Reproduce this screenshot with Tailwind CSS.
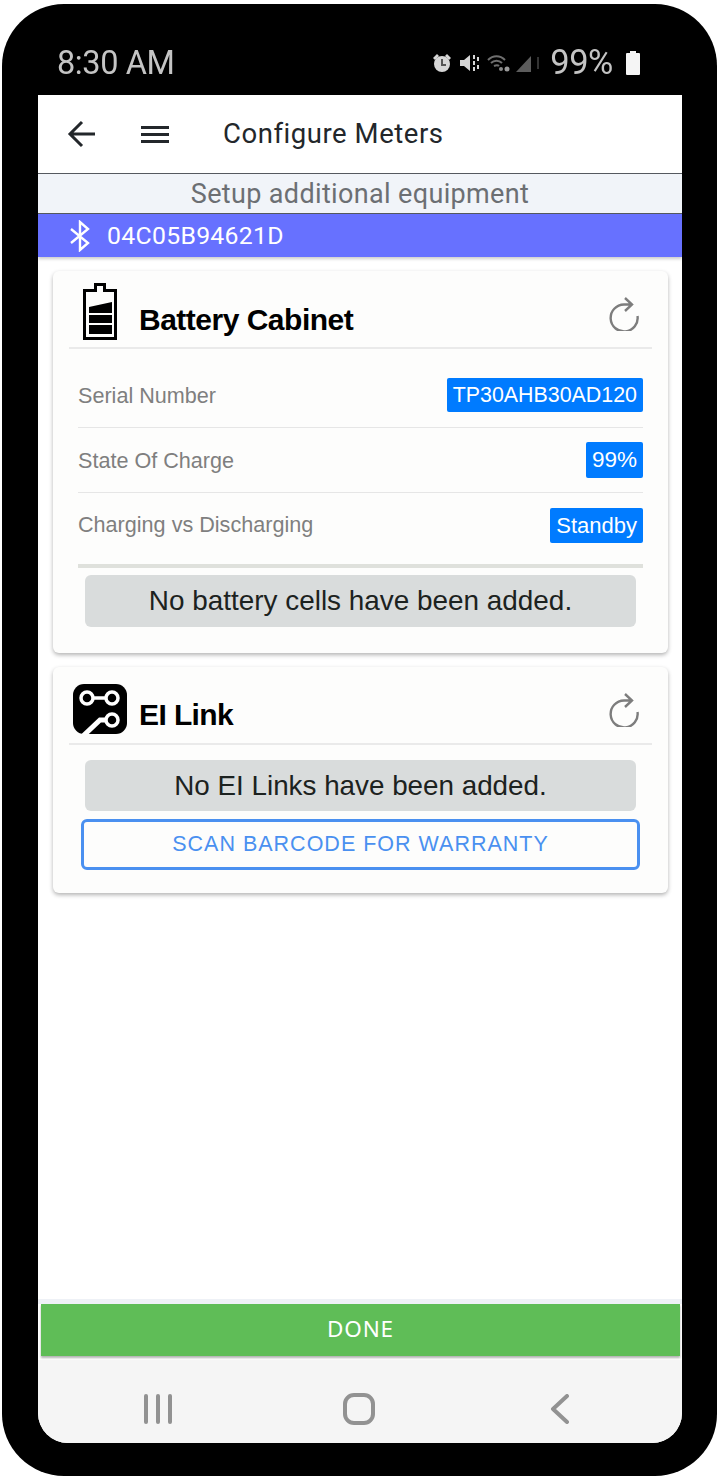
<!DOCTYPE html>
<html lang="en">
<head>
    <meta charset="UTF-8">
    <meta name="viewport" content="width=device-width, initial-scale=1.0">
    <title>Configure Meters</title>
    <script src="https://cdn.jsdelivr.net/npm/@tailwindcss/browser@4"></script>
</head>

<body class="bg-white h-[1479px] w-[720px] overflow-hidden font-['Roboto',sans-serif]">

    <!-- Phone frame -->
    <div class="ml-[2px] mt-[4px] w-[715px] h-[1472px] bg-black rounded-[62px] px-[36px] flex flex-col">

        <!-- Status bar -->
        <div class="h-[91px] shrink-0 flex items-center justify-between pl-[19px] pr-[40px] pt-[27px] text-[#c4c4c4] blur-[0.7px]">
            <span class="text-[32.5px] tracking-[-0.4px]">8:30 AM</span>
            <div class="flex items-center">
                <svg class="w-[20px] h-[20px]" viewBox="0 0 20 20" fill="#d6d6d6">
                    <circle cx="10" cy="11" r="8"/>
                    <path d="M1 5l4-4 2 2-4 4zM19 5l-4-4-2 2 4 4z"/>
                    <path d="M9 6h2v5h3v2H9z" fill="#555"/>
                </svg>
                <svg class="w-[21px] h-[20px] ml-[7px]" viewBox="0 0 21 20" fill="#d6d6d6">
                    <path d="M1 7h4l6-5v16l-6-5H1z"/>
                    <path d="M14 2h2v4h-2zM14 8h2v4h-2zM14 14h2v4h-2zM18 4h2v4h-2zM18 12h2v4h-2z"/>
                </svg>
                <svg class="w-[24px] h-[20px] ml-[7px]" viewBox="0 0 24 20" fill="none" stroke="#6f6f6f" stroke-width="2">
                    <path d="M1 7c5-5 12-5 17 0M4 10c3-3 8-3 11 0M7 13c2-1 4-1 5 0"/>
                    <circle cx="14" cy="16" r="2" fill="#8a8a8a" stroke="none"/>
                    <circle cx="20" cy="16" r="2.5" fill="#9a9a9a" stroke="none"/>
                </svg>
                <svg class="w-[18px] h-[20px] ml-[4px]" viewBox="0 0 18 20" fill="#5c5c5c">
                    <path d="M1 19L16 3v16z"/>
                </svg>
                <span class="w-[2px] h-[12px] ml-[4px] bg-[#333]"></span>
                <span class="text-[34.5px] ml-[11px] tracking-[-0.4px]">99%</span>
                <svg class="w-[16px] h-[24px] ml-[12px]" viewBox="0 0 16 24" fill="#f5f5f5">
                    <path d="M5 0h6v2h3a1 1 0 0 1 1 1v20a1 1 0 0 1-1 1H2a1 1 0 0 1-1-1V3a1 1 0 0 1 1-1h3z"/>
                </svg>
            </div>
        </div>

        <!-- Screen -->
        <div class="w-[644px] h-[1348px] bg-white rounded-b-[30px] overflow-hidden flex flex-col">

            <!-- Toolbar -->
            <div class="h-[78px] shrink-0 flex items-center pl-[29px] border-b border-[#55595f] box-content">
                <svg class="w-[30px] h-[30px]" viewBox="0 0 30 30" fill="none" stroke="#23272b" stroke-width="3">
                    <path d="M28 15H4M15 3L3 15l12 12"/>
                </svg>
                <svg class="w-[30px] h-[24px] ml-[43px]" viewBox="0 0 30 24" fill="#23272b">
                    <path d="M1 4h28v3H1zM1 11h28v3H1zM1 18h28v3H1z"/>
                </svg>
                <span class="ml-[53px] text-[27.5px] text-[#23272b] tracking-[0.55px]">Configure Meters</span>
            </div>

            <!-- Sub header -->
            <div class="h-[38px] shrink-0 bg-[#f1f4f9] border-b border-[#55595f] box-content flex items-center justify-center pt-[1px] text-[27px] text-[#6c6f73] tracking-[0.35px]">
                Setup additional equipment
            </div>

            <!-- Device bar -->
            <div class="h-[43px] shrink-0 bg-[#6771ff] shadow-[0_2px_3px_rgba(0,0,0,0.2)] flex items-center pl-[31px] text-white text-[24.8px] tracking-[0.3px]">
                <svg class="w-[22px] h-[32px]" viewBox="0 0 22 32" fill="none" stroke="white" stroke-width="2.4">
                    <path d="M2 9l17 14-8 7V2l8 7L2 23"/>
                </svg>
                <span class="ml-[16px]">04C05B94621D</span>
            </div>

            <!-- Cards -->
            <div class="flex-1 flex flex-col gap-[14px] pl-[15px] pr-[14px] pt-[14px]">

                <!-- Battery Cabinet -->
                <div class="h-[382px] bg-[#fdfdfc] rounded-[6px] shadow-[0_2px_4px_rgba(0,0,0,0.3)] px-[16px] font-['Liberation_Sans',sans-serif]">
                    <div class="h-[78px] flex items-center border-b-2 border-[#eaeaea]">
                        <svg class="w-[34px] h-[57px] ml-[14px] mt-[5px]" viewBox="0 0 34 57">
                            <path d="M11 0h12v6h11v51H0V6h11z" fill="black"/>
                            <path d="M3 9h11V3h6v6h11v45H3z" fill="#fdfdfc"/>
                            <path d="M6 24l23-5v11H6zM6 32h23v8H6zM6 42h23v9H6z" fill="black"/>
                        </svg>
                        <span class="ml-[22px] mt-[20px] text-[30px] font-bold text-black tracking-[-0.5px]">Battery Cabinet</span>
                        <svg class="w-[32px] h-[34px] ml-auto mr-[12px] mt-[10px]" viewBox="0 0 32 34" fill="none" stroke="#7d7d7d" stroke-width="2.400">
                            <path d="M29.500 19A13.500 13.500 0 1 1 16 7.500h8M17 1l7 6.500-7 6.500"/>
                        </svg>
                    </div>
                    <div class="h-[79px] flex items-center justify-between border-b border-[#e6e6e6] mx-[9px] pt-[14px]">
                        <span class="mt-[2px] text-[21.6px] text-[#7f7f7f]">Serial Number</span>
                        <span class="h-[34px] px-[6px] flex items-center bg-[#007bff] rounded-[2px] text-[21.4px] text-white">TP30AHB30AD120</span>
                    </div>
                    <div class="h-[65px] flex items-center justify-between border-b border-[#e6e6e6] mx-[9px]">
                        <span class="mt-[2px] text-[21.6px] text-[#7f7f7f]">State Of Charge</span>
                        <span class="h-[36px] px-[6px] flex items-center bg-[#007bff] rounded-[2px] text-[22.5px] text-white">99%</span>
                    </div>
                    <div class="h-[75px] flex items-center justify-between border-b-4 border-[#dfe1dc] mx-[9px] pb-[6px]">
                        <span class="text-[21.6px] text-[#7f7f7f]">Charging vs Discharging</span>
                        <span class="h-[35px] px-[6px] flex items-center bg-[#007bff] rounded-[2px] text-[22px] text-white">Standby</span>
                    </div>
                    <div class="h-[52px] mt-[7px] mx-[16px] bg-[#d9dcdc] rounded-[6px] flex items-center justify-center text-[27.9px] text-[#1c2220]">
                        No battery cells have been added.
                    </div>
                </div>

                <!-- EI Link -->
                <div class="h-[226px] bg-[#fdfdfc] rounded-[6px] shadow-[0_2px_4px_rgba(0,0,0,0.3)] px-[16px] font-['Liberation_Sans',sans-serif]">
                    <div class="h-[78px] flex items-center border-b-2 border-[#eaeaea]">
                        <svg class="w-[54px] h-[50px] ml-[4px] mt-[8px]" viewBox="0 0 54 50">
                            <rect width="54" height="50" rx="11" fill="black"/>
                            <path d="M9 53L27 36h10" fill="none" stroke="white" stroke-width="5"/>
                            <path d="M16 14h22" stroke="white" stroke-width="3.500"/>
                            <circle cx="14" cy="14" r="6" fill="black" stroke="white" stroke-width="3.500"/>
                            <circle cx="39" cy="14" r="6" fill="black" stroke="white" stroke-width="3.500"/>
                            <circle cx="39" cy="36" r="6" fill="black" stroke="white" stroke-width="3.500"/>
                        </svg>
                        <span class="ml-[12px] mt-[18px] text-[30px] font-bold text-black tracking-[-0.6px]">EI Link</span>
                        <svg class="w-[32px] h-[34px] ml-auto mr-[12px] mt-[10px]" viewBox="0 0 32 34" fill="none" stroke="#7d7d7d" stroke-width="2.400">
                            <path d="M29.500 19A13.500 13.500 0 1 1 16 7.500h8M17 1l7 6.500-7 6.500"/>
                        </svg>
                    </div>
                    <div class="h-[51px] mt-[15px] mx-[16px] bg-[#d9dcdc] rounded-[6px] flex items-center justify-center text-[27.8px] text-[#1c2220]">
                        No EI Links have been added.
                    </div>
                    <div class="h-[51px] mt-[8px] mx-[12px] border-[3px] border-[#4a90f0] rounded-[6px] flex items-center justify-center text-[21.5px] tracking-[1px] text-[#4a90f0]">
                        SCAN BARCODE FOR WARRANTY
                    </div>
                </div>
            </div>

            <!-- Done button -->
            <div class="h-[5px] shrink-0 bg-[#eef1f6]"></div>
            <div class="h-[52px] shrink-0 ml-[3px] mr-[2px] pb-[2px] bg-[#5fbd57] shadow-[0_2px_2px_rgba(0,0,0,0.3)] flex items-center justify-center text-white text-[22.5px] tracking-[0.8px] font-['Noto_Sans',sans-serif]">
                DONE
            </div>

            <!-- Android nav -->
            <div class="h-[83px] mt-[4px] shrink-0 bg-[#f5f5f5] flex items-center pl-[104px] pt-[14px]">
                <svg class="w-[32px] h-[30px]" viewBox="0 0 32 30" fill="#929292">
                    <rect x="2" y="0" width="4" height="30" rx="2"/>
                    <rect x="14" y="0" width="4" height="30" rx="2"/>
                    <rect x="26" y="0" width="4" height="30" rx="2"/>
                </svg>
                <svg class="w-[34px] h-[32px] ml-[168px]" viewBox="0 0 34 32" fill="none" stroke="#929292" stroke-width="4">
                    <rect x="3" y="2" width="28" height="28" rx="9"/>
                </svg>
                <svg class="w-[20px] h-[30px] ml-[174px]" viewBox="0 0 20 30" fill="none" stroke="#929292" stroke-width="4" stroke-linecap="round" stroke-linejoin="round">
                    <path d="M17 2L3 15l14 13"/>
                </svg>
            </div>
        </div>
    </div>
</body>
</html>
